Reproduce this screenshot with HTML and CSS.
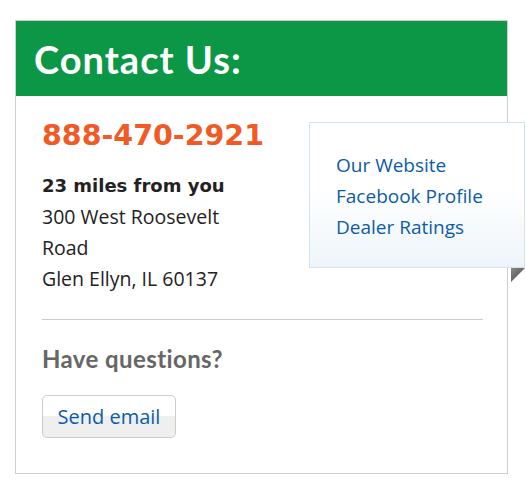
FILE: index.html
```html
<!DOCTYPE html>
<html>
<head>
<meta charset="utf-8">
<link rel="stylesheet" href="styles.css">
</head>
<body>
<div class="card">
  <div class="card-header"><h2 class="title">Contact Us:</h2></div>
  <div class="card-body">
    <div class="info">
      <div class="phone">888-470-2921</div>
      <div class="distance">23 miles from you</div>
      <div class="address">300 West Roosevelt Road<br>Glen Ellyn, IL 60137</div>
    </div>
    <div class="links-pop">
      <a class="link" href="#">Our Website</a>
      <a class="link" href="#">Facebook Profile</a>
      <a class="link" href="#">Dealer Ratings</a>
      <span class="fold"></span>
    </div>
    <hr class="divider">
    <div class="question">Have questions?</div>
    <button class="btn">Send email</button>
  </div>
</div>
</body>
</html>
```
FILE: styles.css
```css
html, body { margin: 0; padding: 0; background: #fff; }
body { padding: 20px 0 0 15px; font-family: "Open Sans", sans-serif; }
.card {
  position: relative;
  width: 491px;
  border: 1px solid #cfcfcf;
  height: 452px;
  box-sizing: content-box;
}
.card-header {
  background: #0c9747;
  height: 75px;
  display: flex;
  align-items: center;
  padding-left: 18px;
}
.title {
  margin: 0;
  color: #fff;
  font-family: "Lato", sans-serif;
  font-weight: 700;
  font-size: 38px;
  letter-spacing: 1px;
}
.card-body { padding: 23px 26px 0; }
.info { width: 205px; }
.phone {
  font-family: "DejaVu Sans", sans-serif;
  font-weight: 700;
  font-size: 28.5px;
  color: #f15a24;
  line-height: 34px;
  white-space: nowrap;
}
.distance {
  margin-top: 17px;
  font-family: "DejaVu Sans", sans-serif;
  font-weight: 700;
  font-size: 18px;
  line-height: 31px;
  color: #222;
  white-space: nowrap;
}
.address {
  font-size: 19.5px;
  line-height: 31px;
  color: #222;
}
.links-pop {
  position: absolute;
  left: 293px;
  top: 101px;
  width: 216px;
  height: 146px;
  border: 1px solid #cfe3f3;
  background: linear-gradient(#ffffff 45%, #eef5fa 100%);
  padding: 27px 0 0 26px;
  box-sizing: border-box;
  display: flex;
  flex-direction: column;
}
.link {
  color: #0b5ca8;
  text-decoration: none;
  font-size: 19px;
  line-height: 31px;
}
.fold {
  position: absolute;
  right: -1px;
  bottom: -15px;
  width: 14px;
  height: 14px;
  background: linear-gradient(135deg, #8a8a8a, #444);
  clip-path: polygon(0 0, 100% 0, 0 100%);
}
.divider {
  margin: 25px 0 0;
  border: 0;
  border-top: 1px solid #cccccc;
  width: 441px;
}
.question {
  margin-top: 24px;
  font-family: "Lato", sans-serif;
  font-weight: 700;
  font-size: 24px;
  letter-spacing: 0.4px;
  color: #666;
  line-height: 30px;
}
.btn {
  margin-top: 21px;
  width: 134px;
  height: 43px;
  border: 1px solid #cccccc;
  border-radius: 5px;
  background: linear-gradient(#ffffff 50%, #efeff0 50%);
  color: #0b5ca8;
  font-family: "Open Sans", sans-serif;
  font-size: 20px;
  padding: 0;
}
```
